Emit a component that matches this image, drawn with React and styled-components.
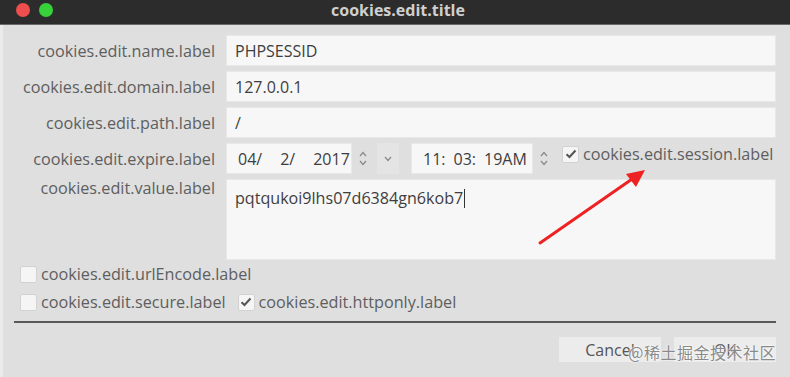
import React from "react";
import styled, { createGlobalStyle } from "styled-components";

const Global = createGlobalStyle`
  html, body { margin: 0; padding: 0; background: #dfdfdf; }
  body { font-family: "Open Sans", "Noto Sans", sans-serif; }
  * { box-sizing: border-box; }
`;

const Window = styled.div`
  position: relative;
  width: 790px;
  height: 377px;
  display: flex;
  flex-direction: column;
  background: #dfdfdf;
  overflow: hidden;
`;

const TitleBar = styled.div`
  height: 25px;
  flex: none;
  display: flex;
  align-items: center;
  background: #2c2c2c;
  border-bottom: 1px solid #6a6a6a;
  position: relative;
  padding-left: 16px;
  gap: 9px;
`;

const Light = styled.span`
  width: 14px;
  height: 14px;
  border-radius: 50%;
  background: ${(p) => p.$color};
  margin-top: -5px;
`;

const Title = styled.div`
  position: absolute;
  left: 0;
  right: 0;
  top: 0;
  height: 24px;
  text-align: center;
  line-height: 20px;
  font-weight: 700;
  font-size: 16px;
  color: #cfcfcf;
  padding-left: 6px;
`;

const Body = styled.div`
  flex: 1;
  display: flex;
  flex-direction: column;
  padding: 10px 14px 0 0;
  border-left: 3px solid #ebebeb;
`;

const FormGrid = styled.div`
  display: grid;
  grid-template-columns: 212px 550px;
  column-gap: 11px;
  row-gap: 5px;
  grid-template-rows: repeat(4, 31px) 81px;
`;

const Label = styled.div`
  justify-self: end;
  align-self: ${(p) => (p.$top ? "start" : "center")};
  line-height: 18px;
  font-size: 16.2px;
  color: #5e5e5e;
  white-space: nowrap;
`;

const TextInput = styled.div`
  background: #f7f7f7;
  border: 1px solid #e8e8e8;
  display: flex;
  align-items: center;
  padding-left: 8px;
  font-size: 16px;
  color: #3e3e3e;
`;

const TextArea = styled(TextInput)`
  align-items: flex-start;
  padding-top: 7px;
  font-size: 16.1px;
`;

const Caret = styled.span`
  display: inline-block;
  width: 1px;
  height: 19px;
  background: #333;
  margin-left: 1px;
  vertical-align: -4px;
`;

const ExpireRow = styled.div`
  display: flex;
  align-items: stretch;
  width: 560px;
`;

const FieldBox = styled.div`
  background: #f7f7f7;
  border: 1px solid #e8e8e8;
  width: ${(p) => p.$w}px;
  display: flex;
  gap: ${(p) => p.$gap}px;
  align-items: center;
  padding-left: ${(p) => p.$pl}px;
  font-size: 16px;
  color: #3e3e3e;
  white-space: nowrap;
`;

const Spin = styled.div`
  width: 12px;
  margin: 0 ${(p) => p.$mr}px 0 5px;
  display: flex;
  flex-direction: column;
  justify-content: center;
  align-items: center;
  gap: 3px;
`;

const Drop = styled.div`
  width: 22px;
  background: #e4e4e4;
  display: flex;
  align-items: center;
  justify-content: center;
  margin-right: 12px;
`;

const CheckRow = styled.label`
  display: flex;
  align-items: center;
  gap: 4px;
  height: 22px;
  font-size: 16.2px;
  color: #5e5e5e;
  white-space: nowrap;
`;

const Box = styled.span`
  width: 17px;
  height: 17px;
  flex: none;
  background: #f5f5f5;
  border: 1px solid #d2d2d2;
  border-radius: 2px;
  display: flex;
  align-items: center;
  justify-content: center;
`;

const ChecksArea = styled.div`
  display: flex;
  flex-direction: column;
  gap: 6px;
  padding: 3px 0 0 17px;
`;

const ChecksLine = styled.div`
  display: flex;
  gap: 12px;
`;

const Separator = styled.div`
  height: 2px;
  background: #595959;
  margin: 8px 0 0 11px;
`;

const Buttons = styled.div`
  display: flex;
  justify-content: flex-end;
  gap: 13px;
  margin-top: 14px;
`;

const Button = styled.div`
  width: 102px;
  height: 25px;
  background: #ececec;
  display: flex;
  align-items: center;
  justify-content: center;
  font-size: 16px;
  color: #555;
`;

const Watermark = styled.div`
  position: absolute;
  right: 14px;
  bottom: 13px;
  font-family: "Noto Sans CJK SC", "Noto Sans", sans-serif;
  font-size: 16px;
  color: #8a8a8a;
  text-shadow: 0 0 2px #fff, 0 0 2px #fff;
  letter-spacing: 0.5px;
`;

const Arrow = styled.svg`
  position: absolute;
  left: 530px;
  top: 160px;
  overflow: visible;
`;

const Check = () => (
  <svg width="12" height="10" viewBox="0 0 12 10">
    <path d="M1.5 5.2 L4.5 8 L10.5 1.5" fill="none" stroke="#555" strokeWidth="2" />
  </svg>
);

const Chev = ({ up }) => (
  <svg width="8" height="6" viewBox="0 0 8 6">
    <path d={up ? "M1 5 L4 1.5 L7 5" : "M1 1 L4 4.5 L7 1"} fill="none" stroke="#8a8a8a" strokeWidth="1.2" />
  </svg>
);

function CheckItem({ checked, children }) {
  return (
    <CheckRow>
      <Box>{checked && <Check />}</Box>
      {children}
    </CheckRow>
  );
}

export default function App() {
  return (
    <>
      <Global />
      <Window>
        <TitleBar>
          <Light $color="#ee4e4e" />
          <Light $color="#37d23a" />
          <Title>cookies.edit.title</Title>
        </TitleBar>
        <Body>
          <FormGrid>
            <Label>cookies.edit.name.label</Label>
            <TextInput>PHPSESSID</TextInput>
            <Label>cookies.edit.domain.label</Label>
            <TextInput>127.0.0.1</TextInput>
            <Label>cookies.edit.path.label</Label>
            <TextInput>/</TextInput>
            <Label>cookies.edit.expire.label</Label>
            <ExpireRow>
              <FieldBox $w={126} $pl={11} $gap={18}>
                <span>04/</span>
                <span>2/</span>
                <span>2017</span>
              </FieldBox>
              <Spin $mr={8}>
                <Chev up />
                <Chev />
              </Spin>
              <Drop>
                <Chev />
              </Drop>
              <FieldBox $w={122} $pl={11} $gap={8}>
                <span>11:</span>
                <span>03:</span>
                <span>19AM</span>
              </FieldBox>
              <Spin $mr={12}>
                <Chev up />
                <Chev />
              </Spin>
              <CheckItem checked>cookies.edit.session.label</CheckItem>
            </ExpireRow>
            <Label $top>cookies.edit.value.label</Label>
            <TextArea>
              <span>
                pqtqukoi9lhs07d6384gn6kob7
                <Caret />
              </span>
            </TextArea>
          </FormGrid>
          <ChecksArea>
            <CheckItem>cookies.edit.urlEncode.label</CheckItem>
            <ChecksLine>
              <CheckItem>cookies.edit.secure.label</CheckItem>
              <CheckItem checked>cookies.edit.httponly.label</CheckItem>
            </ChecksLine>
          </ChecksArea>
          <Separator />
          <Buttons>
            <Button>Cancel</Button>
            <Button>OK</Button>
          </Buttons>
        </Body>
        <Arrow width="120" height="90" viewBox="0 0 120 90">
          <line x1="10" y1="83" x2="105" y2="17" stroke="#ee2222" strokeWidth="3" strokeLinecap="round" />
          <path d="M115 10 L96 14 L106 27 Z" fill="#ee2222" />
        </Arrow>
        <Watermark>@稀土掘金技术社区</Watermark>
      </Window>
    </>
  );
}
